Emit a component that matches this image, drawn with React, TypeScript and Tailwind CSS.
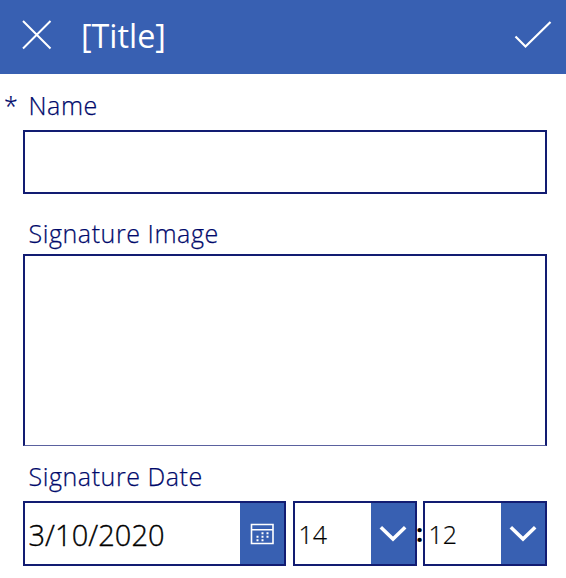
import React from "react";

function Label({ text, className }: { text: string; className: string }) {
  return (
    <label className={`mb-[2px] block pl-[28.5px] text-[25px] font-light leading-[34px] tracking-[0.57px] text-[#00096b] [-webkit-text-stroke:0.25px] ${className}`}>
      {text}
    </label>
  );
}

function TimeSelect({ value }: { value: string }) {
  return (
    <div className="flex h-[65px] w-[124px] border-2 border-[#121c72] bg-white">
      <div className="flex-1 pl-[3.5px] text-[25px] font-light leading-[63px] text-black [-webkit-text-stroke:0.2px]">{value}</div>
      <button className="flex w-[44.5px] items-center justify-center bg-[#3860b2] pl-px">
        <svg width="28" height="17" viewBox="0 0 28 17" fill="none" stroke="white" strokeWidth="3.6">
          <path d="M1.8 2.3 14 14 26.2 2.3" />
        </svg>
      </button>
    </div>
  );
}

export default function App() {
  return (
    <div className="h-[578px] w-[566px] overflow-hidden bg-white font-['Open_Sans',sans-serif]">
      <header className="flex h-[74px] items-center bg-[#3860b2] pl-[22px] pr-[14px] text-white">
        <svg className="mb-[5px]" width="30" height="30" viewBox="0 0 30 30" fill="none" stroke="white" strokeWidth="2">
          <path d="M1 1 28.5 28.5M28.5 1 1 28.5" />
        </svg>
        <h1 className="mb-[4px] ml-[29px] flex-1 text-[32.3px] font-normal leading-[42px]">[Title]</h1>
        <svg className="mb-[4px]" width="38" height="28" viewBox="0 0 38 28" fill="none" stroke="white" strokeWidth="2.2">
          <path d="M1.5 15.5 11.5 25.5 36.5 1" />
        </svg>
      </header>
      <main>
        <div className="flex pt-[14px]">
          <span className="w-0 pl-1 text-[25px] font-light leading-[34px] text-[#00096b] [-webkit-text-stroke:0.25px]">*</span>
          <Label text="Name" className="-ml-1" />
        </div>
        <div className="ml-[23px] mt-[6px] h-[64px] w-[524px] border-2 border-[#121c72]" />
        <Label text="Signature Image" className="mt-[22px]" />
        <div className="ml-[23px] mt-[4px] h-[192px] w-[524px] border-x-2 border-b border-t-2 border-x-[#121c72] border-b-[#5a619f] border-t-[#121c72]" />
        <Label text="Signature Date" className="mt-[13px]" />
        <div className="ml-[23px] mt-[8px] flex w-[524px]">
          <div className="flex h-[65px] w-[263px] border-2 border-[#121c72]">
            <div className="flex-1 pl-[3.5px] text-[29px] font-light leading-[64px] tracking-[0.06px] text-black [-webkit-text-stroke:0.35px]">3/10/2020</div>
            <button className="flex w-[44px] items-center justify-center bg-[#3860b2]">
              <svg width="24" height="22" viewBox="0 0 24 22" fill="none" stroke="white">
                <path d="M1.5 1.5h21.5v19H1.5zM1.5 6.8h21.5" strokeWidth="1.6" />
                <path d="M11.5 10.3h2M16.5 10.3h2M6.5 13.8h2M11.5 13.8h2M16.5 13.8h2M6.5 17.3h2M11.5 17.3h2" strokeWidth="2" />
              </svg>
            </button>
          </div>
          <div className="ml-[7px] flex">
            <TimeSelect value="14" />
            <span className="w-[6px] -translate-x-px text-center text-[25px] font-bold leading-[63px] text-black">:</span>
            <TimeSelect value="12" />
          </div>
        </div>
      </main>
    </div>
  );
}
